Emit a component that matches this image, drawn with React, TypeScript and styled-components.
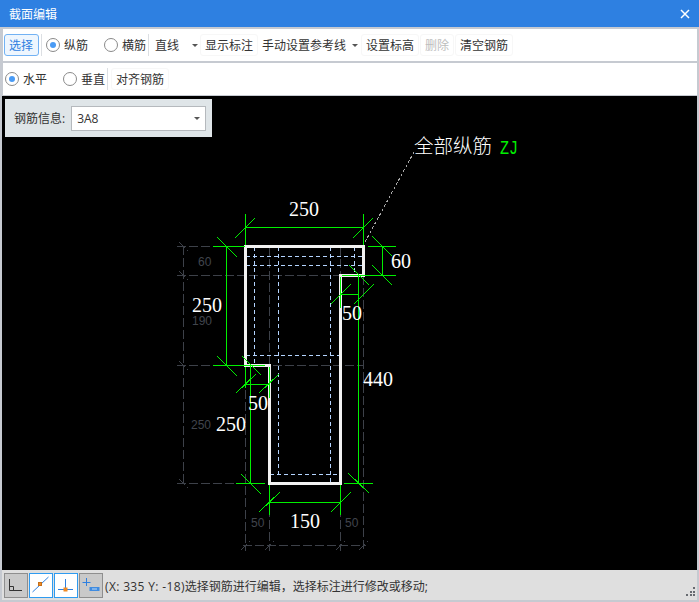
import React from 'react';
import styled, { createGlobalStyle } from 'styled-components';

const GlobalStyle = createGlobalStyle`
  html, body { margin: 0; padding: 0; background: #c6cad1; }
  * { box-sizing: border-box; }
`;

type Seg = [number, number, number, number];

// drawing coordinates are page pixels, the viewBox starts where the canvas does
const outline = '245.5,246.5 363.5,246.5 363.5,275.5 340.5,275.5 340.5,483.5 269.5,483.5 269.5,365.5 245.5,365.5';

const rebar: Seg[] = [
  [246, 256.5, 363, 256.5],
  [246, 265.5, 363, 265.5],
  [246, 355.5, 340, 355.5],
  [270, 474.5, 340, 474.5],
  [254.5, 247, 254.5, 365],
  [278.5, 247, 278.5, 474],
  [330.5, 247, 330.5, 483],
  [354.5, 247, 354.5, 275],
];

const hidden: Seg[] = [
  [177, 246.5, 245, 246.5],
  [177, 275.5, 364, 275.5],
  [177, 365.5, 364, 365.5],
  [177, 483.5, 245, 483.5],
  [183.5, 246, 183.5, 483],
  [269.5, 247, 269.5, 365],
  [340.5, 247, 340.5, 275],
  [245.5, 366, 245.5, 551],
  [269.5, 484, 269.5, 551],
  [340.5, 484, 340.5, 551],
  [363.5, 276, 363.5, 551],
  [243, 545.5, 366, 545.5],
];

const hiddenTicks: Seg[] = [
  [179, 242, 188, 251],
  [179, 271, 188, 280],
  [179, 361, 188, 370],
  [179, 479, 188, 488],
  [241, 550, 250, 541],
  [265, 550, 274, 541],
  [336, 550, 345, 541],
  [359, 550, 368, 541],
];

const dims: Seg[] = [
  // 250 top
  [245.5, 227.5, 363.5, 227.5],
  [245.5, 214, 245.5, 245],
  [363.5, 214, 363.5, 245],
  [235, 238, 255, 218],
  [353, 238, 373, 218],
  // 250 left
  [226.5, 246, 226.5, 365],
  [213, 246.5, 245, 246.5],
  [213, 365.5, 265, 365.5],
  [217, 237, 237, 257],
  [217, 356, 237, 376],
  // 60
  [382.5, 246, 382.5, 275],
  [368, 246.5, 396, 246.5],
  [342, 275.5, 396, 275.5],
  [372, 236, 392, 256],
  [372, 265, 392, 285],
  // 50 upper
  [340.5, 294.5, 358.5, 294.5],
  [340.5, 277, 340.5, 308],
  [331, 304, 351, 284],
  [354, 304, 374, 284],
  // 440
  [358.5, 275, 358.5, 483],
  [349, 265, 369, 285],
  [348, 473, 369, 493],
  [344, 483.5, 373, 483.5],
  // 250 lower
  [250.5, 365, 250.5, 483],
  [236, 483.5, 265, 483.5],
  [242, 356, 261, 375],
  [241, 474, 261, 494],
  // 50 lower
  [245.5, 384.5, 269.5, 384.5],
  [245.5, 367, 245.5, 388],
  [269.5, 367, 269.5, 398],
  [236, 393, 256, 374],
  [259, 393, 279, 374],
  // 150
  [269.5, 502.5, 340.5, 502.5],
  [269.5, 485, 269.5, 515],
  [340.5, 485, 340.5, 515],
  [259, 512, 280, 492],
  [331, 512, 351, 492],
];

const mainLabels: [string, number, number][] = [
  ['250', 289, 216],
  ['250', 192, 312],
  ['60', 391, 268],
  ['50', 342, 320],
  ['440', 363, 386],
  ['50', 248, 410],
  ['250', 216, 431],
  ['150', 290, 528],
];

const faintLabels: [string, number, number][] = [
  ['60', 198, 266],
  ['190', 192, 325],
  ['250', 191, 429],
  ['50', 251, 527],
  ['50', 345, 527],
];

const Lines = ({ segs, as: Comp }: { segs: Seg[]; as: typeof GreenLine }) => (
  <>
    {segs.map(([x1, y1, x2, y2], i) => (
      <Comp key={i} x1={x1} y1={y1} x2={x2} y2={y2} />
    ))}
  </>
);

export default function App() {
  return (
    <Window>
      <GlobalStyle />
      <TitleBar>
        <span>截面编辑</span>
        <CloseIcon viewBox="0 0 10 10">
          <path d="M1 1 L9 9 M9 1 L1 9" />
        </CloseIcon>
      </TitleBar>

      <Toolbar>
        <ToolButton $active>选择</ToolButton>
        <Divider />
        <RadioItem $checked $gap={15}>纵筋</RadioItem>
        <RadioItem>横筋</RadioItem>
        <Divider />
        <LineSelect>
          <span>直线</span>
          <Caret />
        </LineSelect>
        <ToolButton>显示标注</ToolButton>
        <RefMenu>
          <span>手动设置参考线</span>
          <Caret />
        </RefMenu>
        <ToolButton>设置标高</ToolButton>
        <ToolButton $disabled>删除</ToolButton>
        <ToolButton>清空钢筋</ToolButton>
      </Toolbar>

      <Toolbar>
        <RadioItem $checked $gap={15}>水平</RadioItem>
        <RadioItem>垂直</RadioItem>
        <Divider />
        <ToolButton>对齐钢筋</ToolButton>
      </Toolbar>

      <Canvas>
        <Drawing viewBox="2 96 695 474">
          <Lines segs={hidden} as={HiddenLine} />
          <Lines segs={hiddenTicks} as={HiddenLine} />
          <Lines segs={rebar} as={RebarLine} />
          <Leader x1={365} y1={242} x2={414} y2={152} />
          <Section points={outline} />
          <Lines segs={dims} as={GreenLine} />
          {mainLabels.map(([t, x, y], i) => (
            <DimText key={i} x={x} y={y}>{t}</DimText>
          ))}
          {faintLabels.map(([t, x, y], i) => (
            <FaintText key={i} x={x} y={y}>{t}</FaintText>
          ))}
          <NoteText x={414} y={153}>全部纵筋</NoteText>
          <CodeText x={500} y={154} textLength={18} lengthAdjust="spacingAndGlyphs">ZJ</CodeText>
        </Drawing>
        <InfoPanel>
          <InfoLabel>钢筋信息:</InfoLabel>
          <InfoSelect>
            <span>3A8</span>
            <Caret />
          </InfoSelect>
        </InfoPanel>
      </Canvas>

      <StatusBar>
        <SnapButton>
          <svg viewBox="0 0 22 23">
            <path d="M4.5 5 V16.5 H17 M4.5 12.5 H8.5 V16" fill="none" stroke="#333" />
          </svg>
        </SnapButton>
        <SnapButton $on>
          <svg viewBox="0 0 22 23">
            <path d="M2.5 18 L18.5 3" fill="none" stroke="#2d7fe0" />
            <rect x="8.5" y="8.5" width="3" height="3" fill="#f08a24" stroke="#c4701c" strokeWidth="1" />
          </svg>
        </SnapButton>
        <SnapButton $on>
          <svg viewBox="0 0 22 23">
            <path d="M3 15.5 H18 M10.5 5 V15" fill="none" stroke="#2d7fe0" />
            <rect x="8.5" y="13.5" width="4" height="4" fill="#f08a24" />
          </svg>
        </SnapButton>
        <SnapButton>
          <svg viewBox="0 0 22 23">
            <path d="M6.5 4 V12 M2.5 8.5 H10.5" fill="none" stroke="#2d7fe0" />
            <rect x="9.5" y="13" width="10" height="4" fill="#3f8be0" />
            <rect x="12" y="14" width="5" height="2" fill="#7fb2ea" />
          </svg>
        </SnapButton>
        <StatusText>
          <Coords>(X: 335 Y: -18)</Coords>选择钢筋进行编辑，选择标注进行修改或移动;
        </StatusText>
        <Grip viewBox="0 0 9 9">
          <path d="M6.5 0h2v2h-2z M6.5 3.5h2v2h-2z M3.5 3.5h2v2h-2z M6.5 7h2v2h-2z M3.5 7h2v2h-2z M0 7h2v2H0z" />
        </Grip>
      </StatusBar>
    </Window>
  );
}

const UI_FONT = `"Open Sans", "Noto Sans CJK SC", sans-serif`;

const Window = styled.div`
  width: 699px;
  height: 602px;
  display: flex;
  flex-direction: column;
  background: #c6cad1;
  font-family: ${UI_FONT};
  font-size: 12px;
  color: #333;
  overflow: hidden;
`;

const TitleBar = styled.div`
  height: 27px;
  flex: none;
  display: flex;
  align-items: center;
  justify-content: space-between;
  padding: 0 9px;
  background: #2e80e1;
  color: #fff;
`;

const CloseIcon = styled.svg`
  width: 10px;
  height: 10px;
  fill: none;
  stroke: #fff;
  stroke-width: 1.5;
`;

const Toolbar = styled.div`
  height: 32px;
  flex: none;
  margin: 2px 2.5px 0 3px;
  display: flex;
  align-items: center;
  padding-left: 1px;
  background: #fff;
`;

const ToolButton = styled.div<{ $active?: boolean; $disabled?: boolean }>`
  height: 22px;
  display: flex;
  align-items: center;
  padding: 0 ${(p) => (p.$active ? 5 : 4)}px 0 4px;
  margin-right: 1px;
  border-radius: 3px;
  border: 1px solid ${(p) => (p.$active ? '#72b2f4' : '#f7f7f7')};
  background: ${(p) => (p.$active ? '#eef6fe' : '#fff')};
  color: ${(p) => (p.$active ? '#2e80e1' : p.$disabled ? '#bdbdbd' : '#333')};
`;

const Divider = styled.div`
  width: 1px;
  height: 22px;
  flex: none;
  margin: 0 3px 0 1px;
  background: #dcdfe3;
`;

const RadioBase = styled.label<{ $gap?: number }>`
  display: flex;
  align-items: center;
  gap: 4px;
  margin-right: ${(p) => p.$gap ?? 1}px;
  padding-left: 1px;
`;

const RadioMark = styled.span<{ $checked?: boolean }>`
  width: 14px;
  height: 14px;
  flex: none;
  border-radius: 50%;
  border: 1px solid #8a8a8a;
  background: #fff;
  display: flex;
  align-items: center;
  justify-content: center;

  &::after {
    content: '';
    width: 6px;
    height: 6px;
    border-radius: 50%;
    background: ${(p) => (p.$checked ? '#4a9bf5' : 'transparent')};
  }
`;

const RadioItem = ({ $checked, $gap, children }: { $checked?: boolean; $gap?: number; children: React.ReactNode }) => (
  <RadioBase $gap={$gap}>
    <RadioMark $checked={$checked} />
    {children}
  </RadioBase>
);

const Caret = styled.i`
  width: 0;
  height: 0;
  border-left: 3px solid transparent;
  border-right: 3px solid transparent;
  border-top: 3px solid #555;
`;

const LineSelect = styled.div`
  width: 48px;
  display: flex;
  align-items: center;
  justify-content: space-between;
  padding: 0 2px 0 3px;
`;

const RefMenu = styled.div`
  width: 97px;
  display: flex;
  align-items: center;
  justify-content: space-between;
  margin-left: 3px;
  padding-right: 1px;
  margin-right: 2px;
`;

const Canvas = styled.div`
  position: relative;
  flex: none;
  height: 474px;
  margin: 1px 2px 0 2px;
  background: #000;
`;

const Drawing = styled.svg`
  display: block;
  width: 695px;
  height: 474px;
  shape-rendering: crispEdges;
`;

const GreenLine = styled.line`
  stroke: #00f000;
  stroke-width: 1;
`;

const HiddenLine = styled.line`
  stroke: #3d4149;
  stroke-width: 1;
  stroke-dasharray: 9 3;
`;

const RebarLine = styled.line`
  stroke: #b4d4ff;
  stroke-width: 1;
  stroke-dasharray: 4 3;
`;

const Leader = styled.line`
  stroke: #a8a8a8;
  stroke-width: 1;
  stroke-dasharray: 3 2;
`;

const Section = styled.polygon`
  fill: none;
  stroke: #f2f2f2;
  stroke-width: 3;
`;

const DimText = styled.text`
  fill: #fff;
  font-family: 'Liberation Serif', serif;
  font-size: 20px;
`;

const FaintText = styled.text`
  fill: #41454d;
  font-family: 'Liberation Sans', sans-serif;
  font-size: 12px;
`;

const NoteText = styled.text`
  fill: #fff;
  font-family: ${UI_FONT};
  font-weight: 300;
  font-size: 19.5px;
`;

const CodeText = styled.text`
  fill: #00f000;
  font-family: 'Liberation Mono', monospace;
  font-size: 20px;
`;

const InfoPanel = styled.div`
  position: absolute;
  left: 3px;
  top: 3px;
  width: 207px;
  height: 38px;
  display: flex;
  align-items: center;
  gap: 6px;
  padding: 0 6px 0 9px;
  background: #dfe5e8;
`;

const InfoLabel = styled.span`
  flex: none;
`;

const InfoSelect = styled.div`
  flex: 1;
  height: 25px;
  display: flex;
  align-items: center;
  justify-content: space-between;
  padding: 0 5px;
  background: #fff;
  border: 1px solid #b5b9bd;
`;

const StatusBar = styled.div`
  height: 30px;
  flex: none;
  margin: 0 2.5px 0 2px;
  padding: 3px 0 0 2px;
  display: flex;
  align-items: flex-start;
  gap: 1px;
  background: #dfdfdf;
  position: relative;
`;

const SnapButton = styled.div<{ $on?: boolean }>`
  width: 24px;
  height: 25px;
  flex: none;
  border: ${(p) => (p.$on ? '1px solid #2e9bf0' : '1px solid #8e8e8e')};
  background: ${(p) => (p.$on ? '#fff' : '#c9c9c9')};

  svg {
    display: block;
    width: 22px;
    height: 23px;
  }
`;

const StatusText = styled.span`
  margin-left: 1px;
  line-height: 27px;
  color: #333;
  white-space: nowrap;
`;

const Coords = styled.span`
  letter-spacing: 0.35px;
`;

const Grip = styled.svg`
  position: absolute;
  right: 2px;
  bottom: 4px;
  width: 9px;
  height: 9px;
  fill: #666a70;
  shape-rendering: crispEdges;
`;
